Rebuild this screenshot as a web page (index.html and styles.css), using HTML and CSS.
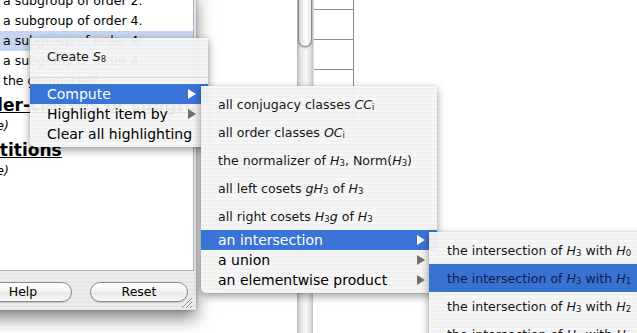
FILE: index.html
```html
<!DOCTYPE html>
<html>
<head>
<meta charset="utf-8">
<link rel="stylesheet" href="styles.css">
</head>
<body>
<div class="desk">
  <div class="bgwin">
    <div class="scroll"><div class="thumb"></div></div>
    <div class="grid">
      <div class="cell first"></div>
      <div class="cell"></div>
      <div class="cell"></div>
      <div class="cell last"></div>
    </div>
  </div>

  <div class="win">
    <div class="list">
      <div class="item">a subgroup of order 2.</div>
      <div class="item">a subgroup of order 4.</div>
      <div class="item sel">a subgroup of order 4.</div>
      <div class="item">a subgroup of order 4.</div>
      <div class="item">the group itself</div>
      <div class="head">Order-classes of subgroups</div>
      <div class="none">(none)</div>
      <div class="head">Partitions</div>
      <div class="none">(none)</div>
    </div>
    <div class="btnbar">
      <div class="btn">Help</div>
      <div class="btn">Reset</div>
    </div>
    <svg class="grip" width="13" height="13" viewBox="0 0 13 13">
      <path d="M12 2L2 12M12 6L6 12M12 10L10 12" stroke="#8a8a8a" stroke-width="1" fill="none"/>
      <path d="M12 3L3 12M12 7L7 12M12 11L11 12" stroke="#ffffff" stroke-width="1" fill="none"/>
    </svg>
  </div>

  <div class="menu m1">
    <div class="mi math"><span class="t">Create <i>S</i><sub>8</sub></span></div>
    <div class="sep"></div>
    <div class="mi hl"><span class="t">Compute</span><svg class="arr" width="8" height="10" viewBox="0 0 8 10"><path d="M0 0L8 5L0 10Z"/></svg></div>
    <div class="mi"><span class="t">Highlight item by</span><svg class="arr" width="8" height="10" viewBox="0 0 8 10"><path d="M0 0L8 5L0 10Z"/></svg></div>
    <div class="mi"><span class="t">Clear all highlighting</span></div>
  </div>

  <div class="menu m2">
    <div class="mi math"><span class="t">all conjugacy classes <i>CC</i><sub>i</sub></span></div>
    <div class="mi math"><span class="t">all order classes <i>OC</i><sub>i</sub></span></div>
    <div class="mi math"><span class="t">the normalizer of <i>H</i><sub>3</sub>, Norm(<i>H</i><sub>3</sub>)</span></div>
    <div class="mi math"><span class="t">all left cosets <i>gH</i><sub>3</sub> of <i>H</i><sub>3</sub></span></div>
    <div class="mi math"><span class="t">all right cosets <i>H</i><sub>3</sub><i>g</i> of <i>H</i><sub>3</sub></span></div>
    <div class="mi hl"><span class="t">an intersection</span><svg class="arr" width="8" height="10" viewBox="0 0 8 10"><path d="M0 0L8 5L0 10Z"/></svg></div>
    <div class="mi"><span class="t">a union</span><svg class="arr" width="8" height="10" viewBox="0 0 8 10"><path d="M0 0L8 5L0 10Z"/></svg></div>
    <div class="mi"><span class="t">an elementwise product</span><svg class="arr" width="8" height="10" viewBox="0 0 8 10"><path d="M0 0L8 5L0 10Z"/></svg></div>
  </div>

  <div class="menu m3">
    <div class="mi math"><span class="t">the intersection of <i>H</i><sub>3</sub> with <i>H</i><sub>0</sub></span></div>
    <div class="mi math hlm"><span class="t">the intersection of <i>H</i><sub>3</sub> with <i>H</i><sub>1</sub></span></div>
    <div class="mi math"><span class="t">the intersection of <i>H</i><sub>3</sub> with <i>H</i><sub>2</sub></span></div>
    <div class="mi math"><span class="t">the intersection of <i>H</i><sub>3</sub> with <i>H</i><sub>3</sub></span></div>
  </div>
</div>
</body>
</html>
```

FILE: styles.css
```css
* { box-sizing: border-box; }

html, body {
  margin: 0;
  padding: 0;
  background: #ffffff;
}

.desk {
  position: relative;
  width: 637px;
  height: 333px;
  overflow: hidden;
  background: #ffffff;
  font-family: "DejaVu Sans", "Liberation Sans", sans-serif;
  color: #000;
}

/* background window: scrollbar + table grid */
.bgwin {
  position: absolute;
  left: 297px;
  top: 0;
  height: 333px;
  display: flex;
  align-items: flex-start;
}

.scroll {
  width: 16px;
  height: 333px;
  background: linear-gradient(to right, #b4b4b4 0, #d6d6d6 2px, #ececec 5px, #f7f7f7 9px, #e4e4e4 13px, #c2c2c2 16px);
  padding: 0 1px;
}

.thumb {
  margin-top: -10px;
  height: 57px;
  border: 1px solid #8a8a8a;
  border-top: none;
  border-radius: 0 0 7px 7px;
  background: linear-gradient(to right, #cfcfcf 0, #f4f4f4 35%, #ffffff 60%, #e2e2e2 100%);
  box-shadow: 0 1px 2px rgba(0,0,0,0.25);
}

.grid {
  width: 41px;
  height: 120px;
  border-right: 1px solid #8c8c8c;
  border-left: 1px solid #e0e0e0;
  display: flex;
  flex-direction: column;
}

.cell {
  height: 30px;
  border-bottom: 1px solid #8c8c8c;
}

.cell.first { height: 10px; }
.cell.last { border-bottom: none; flex: 1; }

/* main window */
.win {
  position: absolute;
  left: -40px;
  top: -9px;
  width: 236px;
  height: 319px;
  display: flex;
  flex-direction: column;
  background: #e6e6e6;
  box-shadow: 0 8px 16px rgba(0,0,0,0.5), 0 0 3px rgba(0,0,0,0.25);
}

.list {
  height: 280px;
  background: #ffffff;
  margin-right: 2px;
  border-right: 1px solid #a3b3c9;
  border-bottom: 1px solid #a3b3c9;
  overflow: hidden;
}

.item {
  height: 20px;
  line-height: 20px;
  padding-left: 43px;
  font-size: 12.5px;
  white-space: nowrap;
}

.item.sel { background: #c6d6f1; }

.head {
  margin-top: 3px;
  padding-left: 8px;
  font-size: 17px;
  font-weight: bold;
  line-height: 22px;
  text-decoration: underline;
  white-space: nowrap;
}

.none {
  padding-left: 8px;
  font-size: 12.5px;
  font-style: italic;
  line-height: 20px;
}

.btnbar {
  flex: 1;
  display: flex;
  gap: 18px;
  padding: 11px 0 0 14px;
  background: repeating-linear-gradient(to bottom, #ececec 0, #ececec 2px, #e6e6e6 2px, #e6e6e6 4px);
}

.btn {
  width: 98px;
  height: 20px;
  border: 1px solid #8b8b8b;
  border-radius: 10px;
  background: linear-gradient(to bottom, #ffffff 0, #f6f6f6 45%, #e9e9e9 55%, #f9f9f9 100%);
  box-shadow: 0 1px 1px rgba(0,0,0,0.15);
  font-size: 12.5px;
  line-height: 18px;
  text-align: center;
}

.grip {
  position: absolute;
  right: 3px;
  bottom: 1px;
}

/* menus */
.menu {
  position: absolute;
  background: repeating-linear-gradient(to bottom, rgba(246,246,246,0.95) 0, rgba(246,246,246,0.95) 2px, rgba(240,240,240,0.95) 2px, rgba(240,240,240,0.95) 4px);
  box-shadow: 0 3px 9px rgba(0,0,0,0.4), 0 0 1px rgba(0,0,0,0.3);
  border-radius: 0 0 5px 5px;
  font-size: 14px;
  color: #000;
}

.m1 { left: 30px; top: 38px; width: 178px; padding: 4px 0 3px; }
.m2 { left: 201px; top: 86px; width: 236px; padding: 4px 0 3px; }
.m3 { left: 429px; top: 232px; width: 230px; padding: 4px 0 3px; }

.mi {
  display: flex;
  align-items: center;
  height: 20px;
  padding: 0 12px 0 17px;
  white-space: nowrap;
}

.mi.math {
  height: 28px;
  font-size: 12.6px;
  color: #161616;
}

.m3 .mi { padding-left: 18px; }

.t { white-space: nowrap; }

.t i { font-style: italic; }

.t sub {
  font-size: 8.5px;
  vertical-align: -1px;
  line-height: 1;
}

.mi.hl { background: #3a74d6; color: #ffffff; }
.mi.hlm { background: #3a72d2; color: #0f1d48; }

.arr {
  margin-left: auto;
  fill: #6f6f6f;
  flex: none;
}

.mi.hl .arr { fill: #ffffff; }

.sep {
  height: 1px;
  margin: 7px 0 6px;
  background: #d9d9d9;
}
```
